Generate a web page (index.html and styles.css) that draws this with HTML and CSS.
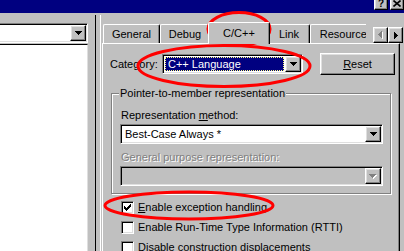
FILE: index.html
```html
<!DOCTYPE html>
<html lang="en">
<head>
    <meta charset="UTF-8">
    <title>Project Settings - C/C++</title>
    <link rel="stylesheet" href="styles.css">
</head>
<body>
    <div class="titlebar">
        <span class="cap-btn help">?</span>
        <span class="cap-btn close">
            <svg width="8" height="7" viewBox="0 0 8 7"><path d="M0.5 0.5L7.5 6.5M7.5 0.5L0.5 6.5" stroke="#000" stroke-width="1.6"/></svg>
        </span>
    </div>

    <div class="main">
        <!-- settings tree (left, cut off) -->
        <div class="leftpane">
            <div class="combo file-combo">
                <div class="combo-field"></div>
                <span class="btn drop-btn">
                    <svg width="7" height="4" viewBox="0 0 7 4"><path d="M0 0H7V1H6V2H5V3H4V4H3V3H2V2H1V1H0Z"/></svg>
                </span>
            </div>
            <div class="file-list"></div>
        </div>
        <div class="splitter"></div>

        <div class="tabctl">
            <div class="tabstrip">
                <div class="tabs">
                    <div class="tab tab-general">General</div>
                    <div class="tab tab-debug">Debug</div>
                    <div class="tab tab-cpp active">C/C++</div>
                    <div class="tab tab-link">Link</div>
                    <div class="tab tab-res">Resources</div>
                </div>
                <div class="tab-scroll">
                    <span class="btn scroll-btn">
                        <svg width="5" height="8" viewBox="0 0 5 8"><path fill="#fff" transform="translate(1,1)" d="M3 0H4V7H3V6H2V5H1V4H0V3H1V2H2V1H3Z"/><path fill="#808080" d="M3 0H4V7H3V6H2V5H1V4H0V3H1V2H2V1H3Z"/></svg>
                    </span>
                    <span class="btn scroll-btn">
                        <svg width="4" height="7" viewBox="0 0 4 7"><path d="M0 0H1V1H2V2H3V3H4V4H3V5H2V6H1V7H0Z"/></svg>
                    </span>
                </div>
            </div>

            <div class="tabpage">
                <div class="category-row">
                    <label class="cat-label">Category:</label>
                    <div class="combo cat-combo">
                        <div class="combo-field"><span class="selected">C++ Language</span></div>
                        <span class="btn drop-btn">
                            <svg width="7" height="4" viewBox="0 0 7 4"><path d="M0 0H7V1H6V2H5V3H4V4H3V3H2V2H1V1H0Z"/></svg>
                        </span>
                    </div>
                    <button class="btn reset-btn"><u>R</u>eset</button>
                </div>

                <fieldset class="group">
                    <legend>Pointer-to-member representation</legend>
                    <div class="field-label">Representation <u>m</u>ethod:</div>
                    <div class="combo wide-combo">
                        <div class="combo-field">Best-Case Always *</div>
                        <span class="btn drop-btn">
                            <svg width="7" height="4" viewBox="0 0 7 4"><path d="M0 0H7V1H6V2H5V3H4V4H3V3H2V2H1V1H0Z"/></svg>
                        </span>
                    </div>
                    <div class="field-label disabled">General purpose representation:</div>
                    <div class="combo wide-combo disabled">
                        <div class="combo-field"></div>
                        <span class="btn drop-btn">
                            <svg width="8" height="5" viewBox="0 0 8 5"><path fill="#fff" transform="translate(1,1)" d="M0 0H7V1H6V2H5V3H4V4H3V3H2V2H1V1H0Z"/><path fill="#808080" d="M0 0H7V1H6V2H5V3H4V4H3V3H2V2H1V1H0Z"/></svg>
                        </span>
                    </div>
                </fieldset>

                <div class="check-row">
                    <span class="checkbox">
                        <svg width="7" height="7" viewBox="0 0 7 7"><path d="M0 2H1V3H2V4H3V3H4V2H5V1H6V0H7V3H6V4H5V5H4V6H3V7H2V6H1V5H0Z"/></svg>
                    </span>
                    <span><u>E</u>nable exception handling</span>
                </div>
                <div class="check-row">
                    <span class="checkbox"></span>
                    <span>Enable Run-Time Type Information (RTTI)</span>
                </div>
                <div class="check-row">
                    <span class="checkbox"></span>
                    <span>Disable construction displacements</span>
                </div>
            </div>
        </div>
    </div>

    <!-- red hand-drawn marks over the dialog -->
    <svg class="marks" width="404" height="251" viewBox="0 0 404 251">
        <ellipse cx="239" cy="29" rx="31" ry="16.5"/>
        <ellipse cx="224" cy="66" rx="86" ry="20.5"/>
        <ellipse cx="189" cy="205.5" rx="84" ry="13.5"/>
    </svg>
</body>
</html>
```

FILE: styles.css
```css
* {
    box-sizing: border-box;
}
body {
    margin: 0;
    width: 404px;
    height: 251px;
    overflow: hidden;
    position: relative;
    background: #c0c0c0;
    font-family: "Liberation Sans", Arial, sans-serif;
    font-size: 11px;
    line-height: 13px;
    color: #000;
}
.btn {
    background: #c0c0c0;
    border: 1px solid;
    border-color: #fff #000 #000 #fff;
    box-shadow: inset -1px -1px #808080, inset 1px 1px #dfdfdf;
}
.titlebar {
    height: 13px;
    background: #000080;
    display: flex;
    justify-content: flex-end;
    gap: 2px;
    overflow: hidden;
}
.cap-btn {
    width: 14px;
    height: 14px;
    margin-top: -4px;
    display: flex;
    align-items: center;
    justify-content: center;
    background: #c0c0c0;
    border: 1px solid;
    border-color: #fff #000 #000 #fff;
    box-shadow: inset -1px -1px #808080, inset 1px 1px #dfdfdf;
    font-weight: bold;
    font-size: 10px;
}
.main {
    display: flex;
    height: 238px;
}
.leftpane {
    width: 95px;
    padding-top: 10px;
    display: flex;
    flex-direction: column;
}
.file-combo {
    width: 90px;
    height: 22px;
    margin-left: -2px;
}
.file-list {
    flex: 1;
    width: 88px;
    margin-top: 1px;
    background: #fff;
    border-top: 1px solid #000;
    border-right: 1px solid #dfdfdf;
}
.splitter {
    width: 6px;
    margin-top: 2px;
    border-left: 1px solid #000;
    border-right: 1px solid #fff;
}
.tabctl {
    width: 302px;
    margin-left: 1px;
    display: flex;
    flex-direction: column;
}
.tabstrip {
    height: 31px;
    margin-bottom: -1px;
    display: flex;
    align-items: flex-end;
}
.tabs {
    width: 264px;
    height: 31px;
    padding-left: 1px;
    display: flex;
    align-items: flex-end;
    overflow: hidden;
}
.tab {
    flex: none;
    height: 19px;
    margin-bottom: 1px;
    border: 1px solid #fff;
    border-bottom: none;
    border-right-color: #000;
    border-radius: 2px 2px 0 0;
    box-shadow: inset -1px 0 #808080;
    text-align: center;
    line-height: 18px;
    white-space: nowrap;
}
.tab.active {
    height: 22px;
    margin: 0 -2px;
    position: relative;
    z-index: 1;
    background: #c0c0c0;
    line-height: 21px;
}
.tab-general { width: 57px; }
.tab-debug { width: 50px; }
.tab-cpp { width: 62px; }
.tab-link { width: 42px; }
.tab-res { width: 72px; }
.tab-scroll {
    display: flex;
    margin: 0 1px 1px auto;
}
.scroll-btn {
    width: 15px;
    height: 16px;
    display: flex;
    align-items: center;
    justify-content: center;
}
.tabpage {
    flex: 1;
    width: 298px;
    border: 1px solid #fff;
    border-bottom: none;
    border-right-color: #000;
    box-shadow: inset -1px 0 #808080;
    display: flex;
    flex-direction: column;
    align-items: flex-start;
}
.combo {
    display: flex;
    height: 20px;
    padding: 1px;
    background: #fff;
    border: 1px solid;
    border-color: #808080 #fff #fff #808080;
    box-shadow: inset 1px 1px #000, inset -1px -1px #dfdfdf;
}
.combo-field {
    flex: 1;
    padding-left: 3px;
    line-height: 16px;
    white-space: nowrap;
    overflow: hidden;
}
.drop-btn {
    width: 16px;
    display: flex;
    align-items: center;
    justify-content: center;
}
.combo.disabled {
    background: #c0c0c0;
}
.category-row {
    display: flex;
    align-items: center;
    height: 22px;
    margin-top: 9px;
    padding-left: 7px;
}
.cat-label {
    width: 52px;
}
.cat-combo {
    width: 141px;
}
.cat-combo .combo-field {
    padding: 0;
}
.selected {
    display: block;
    height: 14px;
    margin: 1px;
    padding-left: 2px;
    background: #000080;
    color: #fff;
    border: 1px dotted #ffff80;
    line-height: 12px;
}
.reset-btn {
    width: 75px;
    height: 22px;
    margin-left: 17px;
    padding: 0;
    font: inherit;
    color: #000;
}
.group {
    width: 280px;
    margin: 11px 0 0 8px;
    padding: 0 7px 7px 8px;
    border: 1px solid #808080;
    box-shadow: inset 1px 1px #fff, 1px 1px #fff;
}
.group legend {
    margin-left: -1px;
    padding: 0 1px;
    line-height: 15px;
    background: #c0c0c0;
}
.field-label {
    margin-top: 8px;
    padding-left: 1px;
}
.field-label.disabled {
    margin-top: 7px;
}
.wide-combo {
    width: 263px;
    margin-top: 2px;
}
.disabled {
    color: #808080;
    text-shadow: 1px 1px #fff;
}
.check-row {
    display: flex;
    align-items: center;
    gap: 4px;
    height: 13px;
    margin: 7px 0 0 18px;
    white-space: nowrap;
}
.checkbox {
    flex: none;
    width: 13px;
    height: 13px;
    display: flex;
    align-items: center;
    justify-content: center;
    background: #fff;
    border: 1px solid;
    border-color: #808080 #fff #fff #808080;
    box-shadow: inset 1px 1px #000, inset -1px -1px #dfdfdf;
}
.marks {
    position: absolute;
    left: 0;
    top: 0;
    pointer-events: none;
}
.marks ellipse {
    fill: none;
    stroke: #f00;
    stroke-width: 3;
}
```
